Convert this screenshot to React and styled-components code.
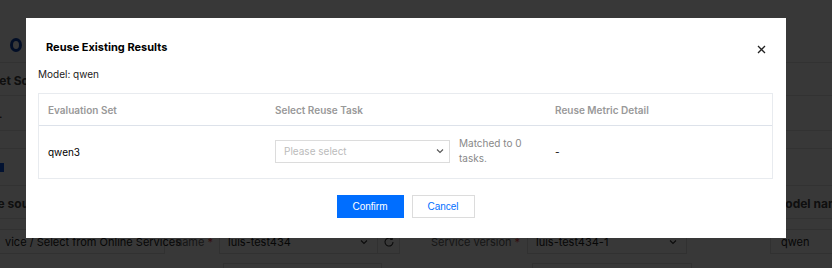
import React from 'react'
import styled, { createGlobalStyle } from 'styled-components'

const GlobalStyle = createGlobalStyle`
  html, body {
    margin: 0;
    padding: 0;
    width: 832px;
    height: 268px;
    overflow: hidden;
    background: #f3f4f7;
    font-family: Inter, "Liberation Sans", sans-serif;
  }
`

const ChevronDown = ({ size = 10, color = '#555' }) => (
  <svg width={size} height={size} viewBox="0 0 10 10" fill="none">
    <path d="M2 3.5 L5 6.5 L8 3.5" stroke={color} strokeWidth="1.1" />
  </svg>
)

const App = () => {
  return (
    <>
      <GlobalStyle />
      <Page>
        <TopBar>
          <Logo />
          <BrandText>I</BrandText>
        </TopBar>
        <SectionRow>
          <SectionTitle $shift={-27}>Target Source</SectionTitle>
        </SectionRow>
        <PlainRow $h={35}>
          <Dot>.</Dot>
        </PlainRow>
        <PlainRow $h={18} />
        <CheckRow>
          <Check />
          <CheckLabel>Learn</CheckLabel>
        </CheckRow>
        <SectionRow>
          <SectionTitle $shift={-40}>Service source</SectionTitle>
          <SectionTitle $shift={0} $right>Model name</SectionTitle>
        </SectionRow>
        <FormRow>
          <BgSelect $w={169} $shift={-4}>
            <span>vice / Select from Online Services</span>
            <ChevronDown color="#333" />
          </BgSelect>
          <FieldLabel $w={54}>name <Req>*</Req></FieldLabel>
          <BgSelect $w={159}>
            <span>luis-test434</span>
            <ChevronDown color="#333" />
          </BgSelect>
          <RefreshBtn>
            <svg width="12" height="12" viewBox="0 0 12 12" fill="none">
              <path d="M10 6a4 4 0 1 1-1.2-2.8" stroke="#333" strokeWidth="1.1" />
              <path d="M9.2 1.5v2h-2" stroke="#333" strokeWidth="1.1" />
            </svg>
          </RefreshBtn>
          <FieldLabel $w={127} $pad={31}>Service version <Req>*</Req></FieldLabel>
          <BgSelect $w={160}>
            <span>luis-test434-1</span>
            <ChevronDown color="#333" />
          </BgSelect>
          <BgInput $ml={83}>qwen</BgInput>
        </FormRow>
        <FormRow $next>
          <BgInput $w={159} $ml={223} />
          <BgInput $w={160} $ml={150} />
        </FormRow>
      </Page>

      <Overlay>
        <Modal>
          <ModalHeader>
            <Title>Reuse Existing Results</Title>
            <Close>
              <svg width="9" height="9" viewBox="0 0 9 9">
                <path d="M1 1 L8 8 M8 1 L1 8" stroke="#222" strokeWidth="1.3" />
              </svg>
            </Close>
          </ModalHeader>
          <ModelLine>Model: qwen</ModelLine>
          <Table>
            <HeadCell>Evaluation Set</HeadCell>
            <HeadCell>Select Reuse Task</HeadCell>
            <HeadCell>Reuse Metric Detail</HeadCell>
            <BodyCell>qwen3</BodyCell>
            <BodyCell>
              <TaskWrap>
                <Select>
                  <Placeholder>Please select</Placeholder>
                  <ChevronDown />
                </Select>
                <Hint>Matched to 0 tasks.</Hint>
              </TaskWrap>
            </BodyCell>
            <BodyCell>-</BodyCell>
          </Table>
          <Footer>
            <Button $primary>Confirm</Button>
            <Button>Cancel</Button>
          </Footer>
        </Modal>
      </Overlay>
    </>
  )
}

/* background page */
const Page = styled.div`
  width: 832px;
  height: 268px;
  background: #fff;
  display: flex;
  flex-direction: column;
  overflow: hidden;
  color: #222;
  font-size: 12px;
  & > * {
    flex-shrink: 0;
  }
`
const TopBar = styled.div`
  height: 63px;
  border-bottom: 1px solid #e3e3e3;
  display: flex;
  align-items: center;
  padding: 27px 0 0 10px;
  box-sizing: border-box;
  gap: 5px;
`
const Logo = styled.div`
  width: 12px;
  height: 14px;
  border-radius: 50%;
  border: 3px solid #0a3fae;
  box-sizing: border-box;
`
const BrandText = styled.span`
  font-size: 14px;
  color: #444;
`
const SectionRow = styled.div`
  height: 33px;
  border-bottom: 1px solid #e3e3e3;
  display: flex;
  align-items: center;
  justify-content: space-between;
  box-sizing: border-box;
`
const SectionTitle = styled.span`
  font-weight: 700;
  font-size: 12px;
  color: #444;
  margin-left: ${p => p.$shift}px;
  margin-right: ${p => (p.$right ? '-14px' : '0')};
  padding-top: 2px;
`
const PlainRow = styled.div`
  height: ${p => p.$h}px;
  border-bottom: 1px solid #e3e3e3;
  box-sizing: border-box;
  display: flex;
  align-items: center;
`
const Dot = styled.span`
  margin-left: -1px;
`
const CheckRow = styled.div`
  height: 37px;
  border-bottom: 1px solid #e3e3e3;
  box-sizing: border-box;
  display: flex;
  align-items: center;
`
const Check = styled.div`
  width: 4px;
  height: 9px;
  background: #0a52e0;
`
const CheckLabel = styled.span`
  font-size: 13px;
  color: #888;
  margin-left: 28px;
`
const FormRow = styled.div`
  display: flex;
  align-items: center;
  margin-top: ${p => (p.$next ? '9px' : '10px')};
  height: 25px;
`
const BgSelect = styled.div`
  width: ${p => p.$w}px;
  height: 25px;
  margin-left: ${p => p.$shift || 0}px;
  border: 1px solid #ddd;
  box-sizing: border-box;
  display: flex;
  align-items: center;
  justify-content: space-between;
  padding: 0 8px;
  font-size: 11px;
  color: #222;
  white-space: nowrap;
  flex-shrink: 0;
  span {
    flex-shrink: 0;
  }
`
const FieldLabel = styled.span`
  width: ${p => p.$w}px;
  padding-left: ${p => p.$pad || 0}px;
  box-sizing: border-box;
  font-size: 11px;
  color: #666;
  white-space: nowrap;
  flex-shrink: 0;
  text-align: ${p => (p.$pad ? 'left' : 'right')};
  padding-right: 6px;
`
const Req = styled.span`
  color: #e54545;
`
const RefreshBtn = styled.div`
  width: 22px;
  height: 25px;
  border: 1px solid #ddd;
  border-left: none;
  box-sizing: border-box;
  display: flex;
  align-items: center;
  justify-content: center;
  flex-shrink: 0;
`
const BgInput = styled.div`
  width: ${p => p.$w || 80}px;
  height: 25px;
  margin-left: ${p => p.$ml}px;
  border: 1px solid #ddd;
  box-sizing: border-box;
  display: flex;
  align-items: center;
  padding: 0 10px;
  font-size: 11px;
  flex-shrink: 0;
`

/* modal */
const Overlay = styled.div`
  position: fixed;
  inset: 0;
  background: rgba(0, 0, 0, 0.78);
  display: flex;
  align-items: flex-start;
  padding: 18px 0 0 26px;
  box-sizing: border-box;
`
const Modal = styled.div`
  width: 760px;
  height: 220px;
  background: #fff;
  box-sizing: border-box;
  padding: 20px 13px 20px 12px;
  display: flex;
  flex-direction: column;
  color: #000;
`
const ModalHeader = styled.div`
  display: flex;
  align-items: center;
  justify-content: space-between;
  padding: 0 7px 0 8px;
  height: 18px;
`
const Title = styled.h2`
  margin: 0;
  font-size: 11px;
  font-weight: 700;
  color: #000;
`
const Close = styled.div`
  display: flex;
  width: 9px;
  height: 9px;
  margin-top: 4px;
`
const ModelLine = styled.div`
  margin-top: 11px;
  font-size: 10px;
  line-height: 14px;
  color: #222;
`
const Table = styled.div`
  margin-top: 12px;
  display: grid;
  grid-template-columns: 227px 280px 1fr;
  grid-template-rows: 32px 52px;
  border: 1px solid #e8ebef;
`
const HeadCell = styled.div`
  display: flex;
  align-items: center;
  padding-left: 9px;
  font-size: 10px;
  font-weight: 600;
  color: #999;
  border-bottom: 1px solid #dde2ea;
`
const BodyCell = styled.div`
  display: flex;
  align-items: center;
  padding-left: 9px;
  font-size: 10px;
  color: #000;
`
const TaskWrap = styled.div`
  display: flex;
  align-items: center;
  gap: 9px;
  margin-top: -2px;
`
const Select = styled.div`
  width: 175px;
  height: 23px;
  border: 1px solid #dcdcdc;
  box-sizing: border-box;
  display: flex;
  align-items: center;
  justify-content: space-between;
  padding: 0 4px 0 8px;
`
const Placeholder = styled.span`
  font-size: 10px;
  color: #bbb;
`
const Hint = styled.span`
  width: 78px;
  font-size: 10px;
  line-height: 15px;
  color: #888;
`
const Footer = styled.div`
  margin-top: auto;
  display: flex;
  justify-content: center;
  gap: 8px;
`
const Button = styled.button`
  height: 23px;
  padding: 0;
  width: ${p => (p.$primary ? '67px' : '63px')};
  border: 1px solid ${p => (p.$primary ? '#006eff' : '#dcdcdc')};
  background: ${p => (p.$primary ? '#006eff' : '#fff')};
  color: ${p => (p.$primary ? '#fff' : '#006eff')};
  font-family: "Liberation Sans", Arial, sans-serif;
  font-size: 10px;
  cursor: pointer;
`

export default App
